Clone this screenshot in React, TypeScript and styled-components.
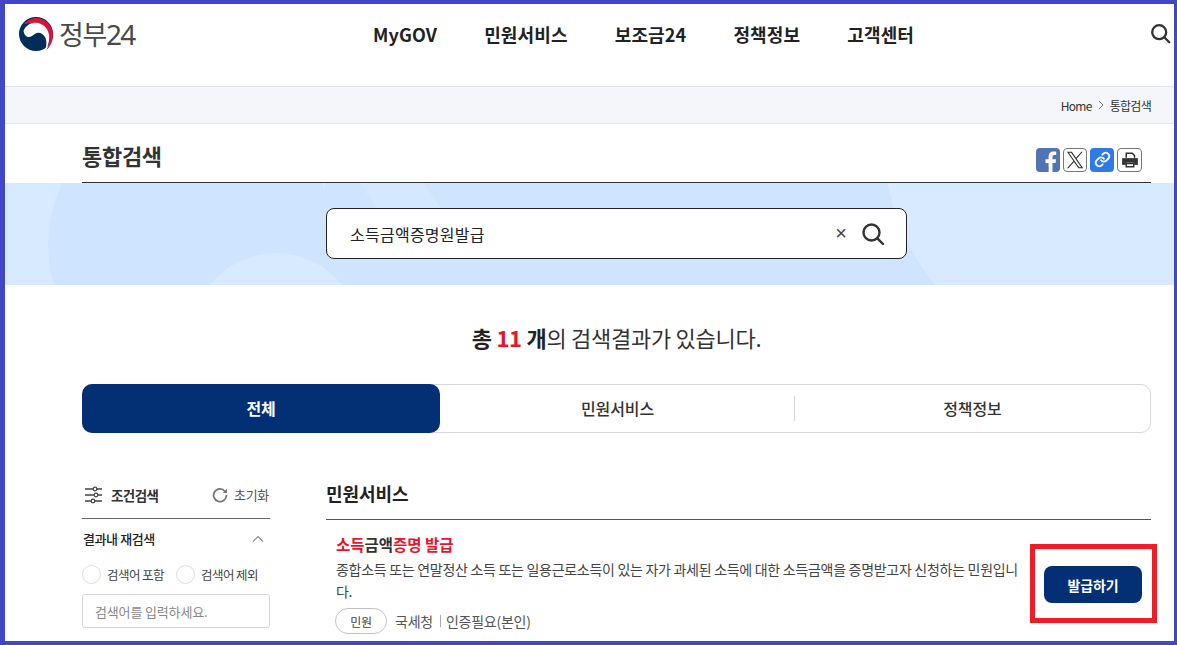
import React from "react";
import styled, { createGlobalStyle } from "styled-components";

const Global = createGlobalStyle`
  html, body { margin: 0; padding: 0; background: #fff; }
  * { box-sizing: border-box; }
  body { font-family: "Noto Sans CJK KR", "Noto Sans", sans-serif; color: #222; }
`;

const Frame = styled.div`
  position: relative;
  width: 1177px;
  height: 645px;
  overflow: hidden;
  border: solid #4048c8;
  border-width: 4px 3px 4px 5px;
  background: #fff;
`;
const Header = styled.header`
  height: 82px;
  display: flex;
  align-items: flex-start;
  padding: 12px 3px 0 13px;
`;
const Logo = styled.div`
  display: flex;
  align-items: center;
  gap: 5px;
  width: 231px;
`;
const LogoText = styled.span`
  font-family: "Noto Sans", sans-serif;
  font-size: 28px;
  line-height: 34px;
  color: #4a4a4a;
  letter-spacing: -1.7px;
  & > span { font-family: "Noto Sans CJK KR", sans-serif; font-size: 27px; letter-spacing: -1.4px; }
`;
const Nav = styled.nav`
  display: flex;
  gap: 47px;
  margin-left: 124px;
  flex: 1;
  height: 36px;
  align-items: center;
`;
const NavItem = styled.a`
  font-size: 18px;
  font-weight: 700;
  color: #222;
  letter-spacing: 0.15px;
`;
const Crumbs = styled.div`
  height: 38px;
  display: flex;
  align-items: center;
  justify-content: flex-end;
  gap: 6px;
  padding-right: 23px;
  background: #f5f6fa;
  border-top: 1px solid #e2e4ea;
  border-bottom: 1px solid #e6e7eb;
  font-size: 12px;
  letter-spacing: -0.7px;
  color: #333;
`;
const TitleRow = styled.div`
  height: 59px;
  margin: 0 23px 0 77px;
  display: flex;
  align-items: center;
  justify-content: space-between;
  border-bottom: 1px solid #333;
  padding-top: 4px;
`;
const Title = styled.h1`
  margin: 0;
  font-size: 22px;
  font-weight: 700;
  letter-spacing: -0.3px;
  color: #333;
`;
const Shares = styled.div`
  display: flex;
  gap: 3px;
  margin-right: 9px;
  margin-top: 9px;
`;
const ShareBtn = styled.span<{ $bg?: string }>`
  width: 24px;
  height: 24px;
  border-radius: 4px;
  display: flex;
  align-items: center;
  justify-content: center;
  background: ${(p) => p.$bg || "#fff"};
  border: ${(p) => (p.$bg ? "none" : "1px solid #777")};
  overflow: hidden;
  &:last-child { width: 25px; }
`;
const Band = styled.section`
  height: 102px;
  display: flex;
  padding: 25px 0 0 321px;
  background:
    radial-gradient(circle 84px at 271px 154px, #d8eaff 83.5px, transparent 84px),
    linear-gradient(56deg, transparent 32%, #d4e8ff 32%, #d4e8ff 86%, transparent 86%) 335px 0 / 100px 26px no-repeat,
    radial-gradient(circle 235px at 1113px -45px, #d8eaff 234.5px, transparent 235px),
    radial-gradient(circle 144px at 187px 62px, #cfe5ff 143.5px, transparent 144px),
    linear-gradient(#cfe5ff, #cfe5ff) 320px 0 / 680px 102px no-repeat,
    #d8eaff;
`;
const SearchBox = styled.div`
  width: 581px;
  height: 51px;
  border: 1px solid #222;
  border-radius: 8px;
  background: #fff;
  display: flex;
  align-items: center;
  padding: 0 21px 0 23px;
`;
const SearchText = styled.span`
  flex: 1;
  font-size: 16px;
  letter-spacing: 0.25px;
  color: #222;
`;
const Clear = styled.span`
  font-family: "Liberation Sans", sans-serif;
  font-size: 20px;
  color: #444;
  margin-right: 14px;
`;
const Summary = styled.p`
  margin: 0 23px 0 77px;
  height: 99px;
  display: flex;
  align-items: center;
  justify-content: center;
  font-size: 22px;
  letter-spacing: -0.28px;
  color: #333;
  padding: 4px 0 0 0;
  white-space: pre;
  & b { font-weight: 700; color: #222; }
  & em { font-style: normal; font-weight: 700; color: #e6142d; }
`;
const Tabs = styled.div`
  height: 49px;
  margin: 0 23px 0 77px;
  border: 1px solid #d5d7dc;
  border-radius: 10px;
  display: grid;
  grid-template-columns: 357px 355px 1fr;
`;
const Tab = styled.div<{ $active?: boolean; $sep?: boolean }>`
  margin: ${(p) => (p.$active ? "-1px 0 -1px -1px" : "0")};
  display: flex;
  align-items: center;
  justify-content: center;
  position: relative;
  padding-bottom: 2px;
  font-size: 16px;
  letter-spacing: -0.1px;
  font-weight: ${(p) => (p.$active ? 700 : 500)};
  color: ${(p) => (p.$active ? "#fff" : "#333")};
  background: ${(p) => (p.$active ? "#033074" : "transparent")};
  border-radius: ${(p) => (p.$active ? "10px" : "0")};
  &::before {
    content: ${(p) => (p.$sep ? '""' : "none")};
    position: absolute;
    left: -1px;
    top: 11px;
    bottom: 11px;
    width: 1px;
    background: #d5d7dc;
  }
`;
const Body = styled.div`
  margin: 0 23px 0 77px;
  padding-top: 50px;
  display: grid;
  grid-template-columns: 188px 1fr;
  column-gap: 56px;
`;
const Side = styled.aside`
  display: flex;
  flex-direction: column;
`;
const SideHead = styled.div`
  height: 36px;
  display: flex;
  align-items: center;
  border-bottom: 1px solid #666;
  padding: 0 1px 12px 2px;
`;
const SideTitle = styled.span`
  font-size: 13.5px;
  font-weight: 700;
  letter-spacing: -0.55px;
  margin-left: 7px;
  flex: 1;
  color: #333;
`;
const Reset = styled.span`
  display: flex;
  align-items: center;
  gap: 6px;
  font-size: 13px;
  letter-spacing: -0.3px;
  color: #555;
`;
const SubHead = styled.div`
  height: 39px;
  display: flex;
  align-items: center;
  justify-content: space-between;
  padding: 0 6px 0 1px;
  font-size: 13px;
  font-weight: 500;
  letter-spacing: -0.4px;
  color: #222;
`;
const Radios = styled.div`
  display: flex;
  height: 33px;
  gap: 12px;
  align-items: center;
`;
const RadioItem = styled.label`
  display: flex;
  align-items: center;
  gap: 6px;
  font-size: 12.5px;
  letter-spacing: -0.55px;
  color: #444;
`;
const Circle = styled.span`
  width: 19px;
  height: 19px;
  border-radius: 50%;
  border: 1px solid #ddd;
  background: #fff;
`;
const Keyword = styled.div`
  height: 34px;
  margin-top: 3px;
  border: 1px solid #d7d7d7;
  border-radius: 3px;
  display: flex;
  align-items: center;
  padding: 0 12px;
  font-size: 13px;
  letter-spacing: -0.15px;
  color: #888;
`;
const Main = styled.main`
  display: flex;
  flex-direction: column;
`;
const MainTitle = styled.h2`
  margin: 0;
  height: 37px;
  border-bottom: 1px solid #555;
  font-size: 18px;
  line-height: 20px;
  font-weight: 700;
  letter-spacing: -0.05px;
  color: #222;
`;
const Result = styled.article`
  display: flex;
  padding: 14px 0 0 10px;
`;
const ResultBody = styled.div`
  width: 689px;
`;
const ResultTitle = styled.h3`
  margin: 0;
  font-size: 15.5px;
  line-height: 20px;
  font-weight: 700;
  letter-spacing: 0;
  color: #333;
  & em { font-style: normal; color: #e6142d; }
`;
const Desc = styled.p`
  margin: 4px 0 0;
  font-size: 14px;
  line-height: 22px;
  letter-spacing: -0.29px;
  color: #444;
`;
const Meta = styled.div`
  display: flex;
  align-items: center;
  margin: 6px 0 0 -1px;
  font-size: 14px;
  letter-spacing: -0.25px;
  color: #555;
`;
const Pill = styled.span`
  width: 52px;
  height: 26px;
  border: 1px solid #c4c4c4;
  border-radius: 13px;
  display: flex;
  align-items: center;
  justify-content: center;
  font-size: 12px;
  color: #444;
  margin-right: 8px;
`;
const Divider = styled.span`
  width: 1px;
  height: 12px;
  background: #aaa;
  margin: 0 5px 0 7px;
`;
const Issue = styled.button`
  width: 98px;
  height: 37px;
  margin: 32px 0 0 19px;
  border: none;
  border-radius: 8px;
  background: #033074;
  color: #fff;
  font: 700 14px "Noto Sans CJK KR", sans-serif;
  letter-spacing: -0.15px;
`;
const Annotation = styled.div`
  position: absolute;
  left: 1025px;
  top: 540px;
  width: 127px;
  height: 79px;
  border: 5px solid #ee1c25;
  pointer-events: none;
`;
const TopSearch = styled.span`
  display: flex;
  margin-top: 7px;
`;

const SearchIcon = ({ size, sw = 2.2, color = "#333" }: { size: number; sw?: number; color?: string }) => (
  <svg width={size} height={size} viewBox="0 0 24 24" fill="none" stroke={color} strokeWidth={sw} strokeLinecap="round">
    <circle cx="10.5" cy="10.5" r="8" />
    <path d="M16.6 16.6 22 22" />
  </svg>
);

const Emblem = () => (
  <svg width="36" height="36" viewBox="0 0 36 36">
    <circle cx="18" cy="18" r="17" fill="#022c59" />
    <path d="M6 8C10 3.500 15 2 19 2 28 2.500 34.500 10 35 18 35.500 25 32 31 28 34.500 31 30 32 25 31 20 29.500 13 24 7.500 17 7 13 6.800 9 7.500 6 8Z" fill="#d9143a" />
    <path d="M5.500 15C8 9 13 6.500 18 6.800 25 7.200 30 12.500 31 19 31.800 25 30 31 27 34 28.500 30 29 26 27.500 22 25.500 17.500 21 15.500 17.500 17.500 15 19 13 21.500 10 21 7.500 20.500 6 18 5.500 15Z" fill="#fff" />
  </svg>
);

const Sliders = () => (
  <svg width="20" height="18" viewBox="0 0 20 18" fill="none" stroke="#444" strokeWidth="1.500">
    <path d="M1 3h17M1 9h17M1 15h17" />
    <circle cx="11" cy="3" r="1.800" fill="#fff" strokeWidth="1.200" />
    <circle cx="12" cy="9" r="1.800" fill="#fff" strokeWidth="1.200" />
    <circle cx="9" cy="15" r="1.800" fill="#fff" strokeWidth="1.200" />
  </svg>
);

const Refresh = () => (
  <svg width="16" height="16" viewBox="0 0 16 16" fill="none" stroke="#777" strokeWidth="1.800">
    <path d="M13 4.200A6.400 6.400 0 1 0 14.400 8" />
    <path d="M15 1.800v4.200h-4.200Z" fill="#777" stroke="none" />
  </svg>
);

export default function App() {
  return (
    <>
      <Global />
      <Frame>
        <Header>
          <Logo>
            <Emblem />
            <LogoText>
              <span>정부</span>24
            </LogoText>
          </Logo>
          <Nav>
            <NavItem>MyGOV</NavItem>
            <NavItem>민원서비스</NavItem>
            <NavItem>보조금24</NavItem>
            <NavItem>정책정보</NavItem>
            <NavItem>고객센터</NavItem>
          </Nav>
          <TopSearch>
            <SearchIcon size={21} sw={2.6} />
          </TopSearch>
        </Header>
        <Crumbs>
          <span>Home</span>
          <svg width="6" height="10" viewBox="0 0 6 10" fill="none" stroke="#777" strokeWidth="1">
            <path d="M1 1l4 4-4 4" />
          </svg>
          <span>통합검색</span>
        </Crumbs>
        <TitleRow>
          <Title>통합검색</Title>
          <Shares>
            <ShareBtn $bg="#5273b5">
              <svg width="24" height="24" viewBox="0 0 24 24" fill="#fff">
                <path d="M16.500 24v-9h3l.5-3.800h-3.500V9c0-1.200.4-1.900 2-1.900H20.200V3.700c-.6-.1-1.600-.2-2.800-.2-2.900 0-4.800 1.700-4.800 4.900v2.800H9.500V15h3.100v9Z" />
              </svg>
            </ShareBtn>
            <ShareBtn>
              <svg width="18" height="18" viewBox="0 0 24 24" fill="#333">
                <path d="M14.200 10.200 22.300 1h-1.900l-7 8L7.800 1H1.300l8.500 12.300L1.300 23h1.900l7.400-8.500 5.900 8.500h6.500ZM3.900 2.400h2.900l13.500 19.300h-2.900Z" />
              </svg>
            </ShareBtn>
            <ShareBtn $bg="#2f7ae5">
              <svg width="17" height="17" viewBox="0 0 24 24" fill="none" stroke="#fff" strokeWidth="2.600" strokeLinecap="round">
                <path d="M10 13a5 5 0 0 0 7.500.5l3-3a5 5 0 0 0-7-7l-1.700 1.700" />
                <path d="M14 11a5 5 0 0 0-7.500-.5l-3 3a5 5 0 0 0 7 7l1.700-1.700" />
              </svg>
            </ShareBtn>
            <ShareBtn>
              <svg width="18" height="18" viewBox="0 0 24 24" fill="none" stroke="#333">
                <path d="M7 9V3h8l3 3v3" strokeWidth="2" />
                <path d="M2 10h20v8h-4v-3H6v3H2Z" fill="#333" strokeWidth="1" />
                <path d="M7 16.500h10V21H7Z" strokeWidth="2" />
              </svg>
            </ShareBtn>
          </Shares>
        </TitleRow>
        <Band>
          <SearchBox>
            <SearchText>소득금액증명원발급</SearchText>
            <Clear>×</Clear>
            <SearchIcon size={24} sw={2.4} />
          </SearchBox>
        </Band>
        <Summary>
          <b>총 </b>
          <em>11</em>
          <b> 개</b>의 검색결과가 있습니다.
        </Summary>
        <Tabs>
          <Tab $active>전체</Tab>
          <Tab>민원서비스</Tab>
          <Tab $sep>정책정보</Tab>
        </Tabs>
        <Body>
          <Side>
            <SideHead>
              <Sliders />
              <SideTitle>조건검색</SideTitle>
              <Reset>
                <Refresh />
                초기화
              </Reset>
            </SideHead>
            <SubHead>
              결과내 재검색
              <svg width="12" height="8" viewBox="0 0 12 8" fill="none" stroke="#888" strokeWidth="1.200">
                <path d="M1 6.500 6 1.500l5 5" />
              </svg>
            </SubHead>
            <Radios>
              <RadioItem>
                <Circle />
                검색어 포함
              </RadioItem>
              <RadioItem>
                <Circle />
                검색어 제외
              </RadioItem>
            </Radios>
            <Keyword>검색어를 입력하세요.</Keyword>
          </Side>
          <Main>
            <MainTitle>민원서비스</MainTitle>
            <Result>
              <ResultBody>
                <ResultTitle>
                  <em>소득</em>금액<em>증명 발급</em>
                </ResultTitle>
                <Desc>
                  종합소득 또는 연말정산 소득 또는 일용근로소득이 있는 자가 과세된 소득에 대한 소득금액을 증명받고자 신청하는 민원입니다.
                </Desc>
                <Meta>
                  <Pill>민원</Pill>
                  국세청
                  <Divider />
                  인증필요(본인)
                </Meta>
              </ResultBody>
              <Issue>발급하기</Issue>
            </Result>
          </Main>
        </Body>
        <Annotation />
      </Frame>
    </>
  );
}
